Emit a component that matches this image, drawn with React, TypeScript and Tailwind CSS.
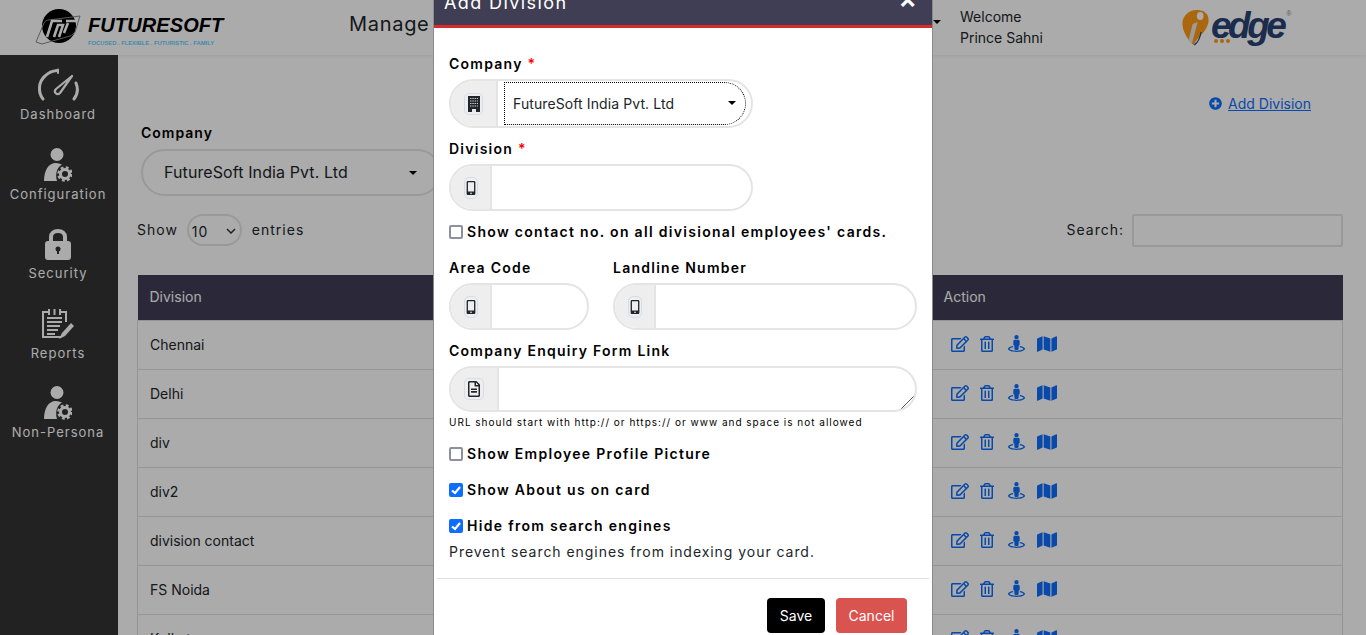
import React from 'react';
import {
  FaMap,
  FaMobileAlt,
  FaPlusCircle,
  FaRegEdit,
  FaRegFileAlt,
  FaRegTrashAlt,
  FaStreetView,
} from 'react-icons/fa';

const GaugeIcon = () => (
  <svg width="42" height="34" viewBox="0 0 42 34" fill="none" stroke="currentColor" strokeWidth="3" strokeLinecap="round">
    <path d="M6 31 C1 25 1 14 8 8 C11 5 15 3 20 2.500" />
    <path d="M37 31 C41 26 41 20 39 15" />
    <path d="M21 1.500 V5" strokeWidth="2" />
    <path d="M35 8 L19 21 C16 24 20 28 23 25 Z" strokeWidth="2.200" strokeLinejoin="round" />
  </svg>
);

const ReportIcon = () => (
  <svg width="32" height="30" viewBox="0 0 32 30" fill="none" stroke="currentColor" strokeWidth="2">
    <path d="M6 3 H1 V28 H19" />
    <path d="M19 3 H24 V13" />
    <path d="M7 0 V6 M12.500 0 V6 M18 0 V6" />
    <path d="M5 9 H20 M5 13 H20 M5 17 H18 M5 21 H16 M5 25 H13" strokeWidth="1.800" />
    <path d="M17 30 L20 24 L29 14 L32 17 L23 27 Z" fill="currentColor" stroke="none" />
  </svg>
);

const UserGearIcon = () => (
  <svg width="28" height="34" viewBox="0 0 28 34" fill="currentColor">
    <circle cx="13" cy="6.500" r="6.500" />
    <path d="M0 33 C0 23 4 15 12 15 C14 15 16 15.500 18 16.500 C13 19 11 26 13 33 Z" />
    <circle cx="21" cy="26" r="4.500" fill="none" stroke="currentColor" strokeWidth="3" />
    <circle cx="21" cy="26" r="6.500" fill="none" stroke="currentColor" strokeWidth="2.500" strokeDasharray="2.800 2.300" />
  </svg>
);

const LockIcon = () => (
  <svg width="28" height="32" viewBox="0 0 28 32">
    <path d="M7 14 V9 C7 5 10 3 14 3 C18 3 21 5 21 9 V14" fill="none" stroke="currentColor" strokeWidth="4" />
    <rect x="1" y="13" width="26" height="19" rx="3" fill="currentColor" />
    <circle cx="14" cy="21" r="2.500" fill="#333" />
    <rect x="13" y="21" width="2" height="5" fill="#333" />
  </svg>
);

const BuildingIcon = () => (
  <svg width="12" height="16" viewBox="0 0 12 16">
    <rect width="12" height="16" fill="#212529" />
    <path d="M2 2.500 H10 M2 5 H10 M2 7.500 H10 M2 10 H10" stroke="#c8c8c8" strokeWidth="1" strokeDasharray="1.500 0.800" />
    <rect x="4" y="13" width="4" height="3" fill="#e8e8e8" />
  </svg>
);

const FutureSoftLogo = () => (
  <div className="flex items-start w-[349px] pl-[34px] pt-[8px]">
    <svg width="50" height="38" viewBox="0 0 50 38" className="shrink-0">
      <circle cx="25" cy="18" r="17" fill="#000" />
      <path d="M2 34 L10 15 C11 13 13 12 15 12 L46 8 L41 24 C40 26 38 27 36 28 L8 36 Z" fill="none" stroke="#888" strokeWidth="1" />
      <path d="M13 29 L18 13 H28 M20 29 L24 17 H29 L25 29 M32 13 H42 M30 25 L34 15" fill="none" stroke="#ffffff" strokeWidth="2.600" />
    </svg>
    <div className="ml-[4px] flex flex-col">
      <span className="font-['Liberation_Sans',sans-serif] font-bold italic text-[20px] leading-[22px] mt-[6px] tracking-[0.1px] text-black">
        FUTURESOFT
      </span>
      <span className="font-['Liberation_Sans',sans-serif] font-bold text-[5.800px] leading-[8px] mt-[3px] whitespace-nowrap text-[#5fd0ff]">
        FOCUSED . FLEXIBLE . FUTURISTIC . FAMILY
      </span>
    </div>
  </div>
);

const EdgeLogo = () => (
  <div className="flex items-start ml-[138px] pt-[8px]">
    <svg width="30" height="38" viewBox="0 0 36 38" preserveAspectRatio="none" className="shrink-0">
      <path d="M3 22 C-2 10 8 1 21 2 C32 3 36 10 31 19 C27 26 20 29 15 37 C10 33 6 29 3 22 Z" fill="#ff9a14" />
      <circle cx="23" cy="8" r="4" fill="#fff" />
      <path d="M20 14 L13 36 L9 33 L14 16 Z" fill="#e8e8e8" />
      <path d="M16 37 C21 34 23 30 24 24" fill="none" stroke="#2a4a88" strokeWidth="1.500" />
    </svg>
    <span className="relative font-['Liberation_Sans',sans-serif] font-bold italic text-[37px] leading-[36px] tracking-[-3.500px] text-[#2a4275]">
      edge
      <span className="absolute -right-[8px] top-[2px] text-[7px] leading-[8px] tracking-normal not-italic font-normal text-[#888]">®</span>
      <svg width="18" height="6" viewBox="0 0 18 6" className="absolute left-[2px] top-[30px]" fill="#ff9a14">
        <circle cx="3" cy="3" r="2" />
        <circle cx="9" cy="3" r="2" />
        <circle cx="15" cy="3" r="2" />
      </svg>
    </span>
  </div>
);

const Caret = ({ className }: { className: string }) => (
  <span className={`pointer-events-none absolute border-x-[4px] border-t-[4px] border-x-transparent border-t-black ${className}`} />
);

const Header = () => (
  <header className="h-[55px] shrink-0 flex bg-white shadow-[0_1px_3px_rgba(0,0,0,0.08)] text-[#212529]">
    <FutureSoftLogo />
    <div className="relative text-[20px] leading-[49px] tracking-[0.7px] w-[611px]">
      Manage
      <Caret className="right-[19px] top-[20px]" />
    </div>
    <div className="mt-[6px] text-[14px] leading-[21px]">
      <div>Welcome</div>
      <div>Prince Sahni</div>
    </div>
    <EdgeLogo />
  </header>
);

const navItems = [
  { label: 'Dashboard', icon: <GaugeIcon /> },
  { label: 'Configuration', icon: <UserGearIcon /> },
  { label: 'Security', icon: <LockIcon /> },
  { label: 'Reports', icon: <ReportIcon /> },
  { label: 'Non-Persona', icon: <UserGearIcon /> },
];

const Sidebar = () => (
  <aside className="w-[118px] shrink-0 bg-[#333] text-white">
    {navItems.map((item) => (
      <div key={item.label} className="h-[79.500px] pt-[13px] pr-[2px] flex flex-col items-center">
        <div className="h-[34px] flex items-center justify-center">{item.icon}</div>
        <div className="mt-[2px] text-[13px] leading-[20px] tracking-[1px] whitespace-nowrap">{item.label}</div>
      </div>
    ))}
  </aside>
);

const rows = ['Chennai', 'Delhi', 'div', 'div2', 'division contact', 'FS Noida', 'Kolkata'];

const DivisionTable = () => (
  <table className="mt-[28px] -ml-px w-[1206px] table-fixed border-collapse text-[14px] text-[#212529]">
    <thead>
      <tr className="h-[45px] bg-[#403e55] text-white">
        <th className="px-[12px] pb-[1px] text-left font-normal">Division</th>
        <th className="w-[411px] px-[12px] pb-[1px] text-left font-normal">Action</th>
      </tr>
    </thead>
    <tbody>
      {rows.map((row) => (
        <tr key={row} className="h-[49px] border border-[#dedede]">
          <td className="px-[12px]">{row}</td>
          <td className="px-[12px] pb-[2px]">
            <div className="flex items-center pl-[7px] text-[#0d6efd]">
              <FaRegEdit size={18} />
              <FaRegTrashAlt size={16} className="ml-[10px]" />
              <FaStreetView size={17} className="ml-[13px]" />
              <FaMap size={20} className="ml-[12px]" />
            </div>
          </td>
        </tr>
      ))}
    </tbody>
  </table>
);

const MainContent = () => (
  <main className="flex-1 min-w-0 pl-[20px] pr-[23px] pt-[38px]">
    <div className="h-[20px] flex justify-end pr-[32px]">
      <a className="flex items-center text-[14px] text-[#0d6efd] underline">
        <FaPlusCircle size={13} className="mr-[6px]" />
        Add Division
      </a>
    </div>
    <div className="mt-[10px] ml-[3px] text-[14px] leading-[20px] font-semibold tracking-[1px] text-black">Company</div>
    <div className="relative mt-[6px] ml-[3px] w-[300px] h-[47px]">
      <select className="w-full h-full appearance-none rounded-full border-2 border-[#e4e4e4] bg-white pl-[21px] pb-[2px] text-[16px] tracking-[0.1px] text-[#212529]">
        <option>FutureSoft India Pvt. Ltd</option>
      </select>
      <Caret className="right-[24px] top-[22px]" />
    </div>
    <div className="mt-[18px] h-[33px] -ml-[1px] flex items-start text-[14px] leading-[32px] tracking-[1px] text-[#212529]">
      <span>Show</span>
      <div className="relative ml-[9px] w-[55px] h-[32px]">
        <select className="w-full h-full appearance-none rounded-full border-2 border-[#e4e4e4] bg-white pl-[3px] text-[14px]">
          <option>10</option>
        </select>
        <svg width="10" height="6" viewBox="0 0 10 6" className="absolute right-[6px] top-[14px]" fill="none" stroke="#333" strokeWidth="1.500">
          <path d="M1 1 L5 5 L9 1" />
        </svg>
      </div>
      <span className="ml-[10px]">entries</span>
      <span className="ml-auto mr-[8px]">Search:</span>
      <input className="w-[211px] h-[33px] border-2 border-[#e4e4e4] rounded-[2px] bg-white" />
    </div>
    <DivisionTable />
  </main>
);

const AddonIcon = ({ children, w }: { children: React.ReactNode; w: string }) => (
  <span className={`flex items-center justify-center h-[22px] rounded-[5px] border border-[#d5dde6] text-[#212529] ${w}`}>
    {children}
  </span>
);

const Required = () => <span className="text-[#f00]">*</span>;

const FieldLabel = ({ children, className = '' }: { children: React.ReactNode; className?: string }) => (
  <div className={`text-[14px] leading-[20px] font-semibold tracking-[1.250px] text-black ${className}`}>{children}</div>
);

const PhoneField = ({ className }: { className: string }) => (
  <div className={`flex h-[47px] rounded-full border-2 border-[#e4e4e4] overflow-hidden ${className}`}>
    <div className="w-[39px] shrink-0 bg-[#eee] flex items-center justify-center">
      <AddonIcon w="w-[14px]">
        <FaMobileAlt size={14} />
      </AddonIcon>
    </div>
    <input className="min-w-0 flex-1 border-l-2 border-[#e4e4e4] outline-none" />
  </div>
);

const CheckRow = ({ label, checked, className }: { label: string; checked?: boolean; className: string }) => (
  <label className={`flex items-center h-[20px] text-[14px] font-semibold tracking-[1.300px] text-black ${className}`}>
    <span className="relative w-[14px] h-[14px] shrink-0">
      <input
        type="checkbox"
        defaultChecked={checked}
        className="block w-[14px] h-[14px] appearance-none rounded-[2px] border-2 border-[#8f8f9d] bg-white checked:border-[#0d6efd] checked:bg-[#0d6efd]"
      />
      {checked && (
        <svg viewBox="0 0 14 14" className="absolute inset-0" fill="none" stroke="#fff" strokeWidth="2.200">
          <path d="M3 7.500 L6 10 L11 4" />
        </svg>
      )}
    </span>
    <span className="ml-[4px] pb-[2px] whitespace-nowrap">{label}</span>
  </label>
);

const AddDivisionModal = () => (
  <div className="absolute left-[433px] top-0 z-20 w-[500px] h-[635px] bg-white border-x border-[#8a8a8a] overflow-hidden">
    <div className="h-[28px] flex items-start justify-between overflow-hidden bg-[#403e55] border-b-[3px] border-[#d92b2b] pl-[10px] pr-[15px] text-white">
      <span className="-mt-[11px] text-[18px] leading-[27px] tracking-[1.400px]">Add Division</span>
      <span className="-mt-[16px] text-[28px] leading-[28px] font-semibold">×</span>
    </div>
    <div className="px-[15px] pt-[26px]">
      <FieldLabel>
        Company <Required />
      </FieldLabel>
      <div className="mt-[5px] flex w-[304px] h-[49px] rounded-full border-2 border-[#e4e4e4] overflow-hidden">
        <div className="w-[45px] shrink-0 bg-[#eee] flex items-center justify-center">
          <AddonIcon w="w-[19px]">
            <BuildingIcon />
          </AddonIcon>
        </div>
        <div className="relative flex-1 border-l-2 border-[#e4e4e4] pl-[7px] py-[2px] pr-[6px]">
          <select className="w-full h-full appearance-none rounded-r-[21px] outline outline-1 outline-dotted outline-black bg-white pl-[8px] text-[14px] tracking-[0.1px] text-[#212529]">
            <option>FutureSoft India Pvt. Ltd</option>
          </select>
          <Caret className="right-[15px] top-[20px]" />
        </div>
      </div>

      <FieldLabel className="mt-[11px]">
        Division <Required />
      </FieldLabel>
      <PhoneField className="mt-[5px] w-[304px]" />

      <CheckRow label="Show contact no. on all divisional employees' cards." className="mt-[11px]" />

      <div className="mt-[16px] flex gap-[24px]">
        <div>
          <FieldLabel>Area Code</FieldLabel>
          <PhoneField className="mt-[5px] w-[140px]" />
        </div>
        <div>
          <FieldLabel>Landline Number</FieldLabel>
          <PhoneField className="mt-[5px] w-[304px]" />
        </div>
      </div>

      <FieldLabel className="mt-[11px]">Company Enquiry Form Link</FieldLabel>
      <div className="relative mt-[5px] flex w-[468px] h-[46px] rounded-[23px] border-2 border-[#e4e4e4] overflow-hidden">
        <div className="w-[46px] shrink-0 bg-[#eee] flex items-center justify-center">
          <AddonIcon w="w-[20px]">
            <FaRegFileAlt size={16} />
          </AddonIcon>
        </div>
        <textarea className="flex-1 min-w-0 resize-none border-l-2 border-[#e4e4e4] outline-none" />
        <svg width="15" height="15" viewBox="0 0 15 15" className="absolute right-0 bottom-0" stroke="#555" strokeWidth="1">
          <path d="M0 15 L15 0 M4 15 L15 4 M8 15 L15 8 M12 15 L15 12" />
        </svg>
      </div>
      <div className="mt-[3px] text-[10px] leading-[14px] tracking-[1px] text-black">
        URL should start with http:// or https:// or www and space is not allowed
      </div>

      <CheckRow label="Show Employee Profile Picture" className="mt-[15px]" />
      <CheckRow label="Show About us on card" checked className="mt-[16px]" />
      <CheckRow label="Hide from search engines" checked className="mt-[16px]" />
      <div className="mt-[6px] text-[14px] leading-[20px] tracking-[0.950px] text-[#212529]">
        Prevent search engines from indexing your card.
      </div>
    </div>
    <div className="mx-[3px] mt-[16px] border-t border-[#e0e0e0] pt-[19px] pr-[22px] flex justify-end gap-[11px] text-[14px] text-white">
      <button className="w-[58px] h-[35px] rounded-[4px] bg-black">Save</button>
      <button className="w-[71px] h-[35px] rounded-[4px] bg-[#d9534f]">Cancel</button>
    </div>
  </div>
);

const App: React.FC = () => {
  return (
    <div className="relative w-screen h-screen overflow-hidden flex flex-col bg-white font-['Inter',sans-serif]">
      <Header />
      <div className="flex flex-1 min-h-0">
        <Sidebar />
        <MainContent />
      </div>
      {/* modal backdrop */}
      <div className="absolute inset-0 z-10 bg-[rgba(0,0,0,0.33)]" />
      <AddDivisionModal />
    </div>
  );
};

export default App;
